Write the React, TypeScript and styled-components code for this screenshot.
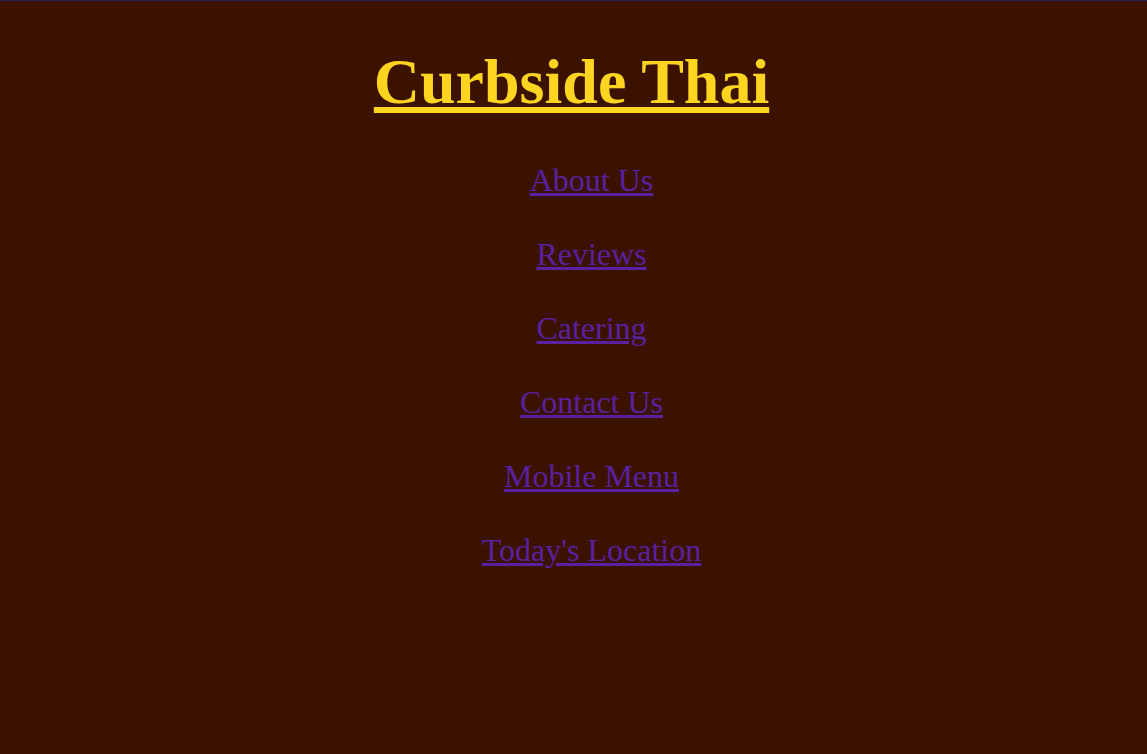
import React from "react";
import styled, { createGlobalStyle } from "styled-components";

const Global = createGlobalStyle`
  html {
    background: #3b1100;
    border-top: 1px solid #26204a;
  }
  body {
    margin: 8px 12px 8px 8px;
    background: #3b1100;
    font-family: "Liberation Serif", "Times New Roman", serif;
  }
`;

const Page = styled.main`
  display: block;
  text-align: center;
`;

const Title = styled.h1`
  margin: 36px 0 43px;
  font-size: 64px;
  font-weight: bold;
  line-height: normal;
  color: #fdd420;
  text-decoration: underline;
`;

const NavList = styled.ul`
  list-style: none;
  margin: 0;
  padding: 0 0 0 40px;
  display: flex;
  flex-direction: column;
  align-items: center;
  gap: 37px;
`;

const NavItem = styled.li`
  font-size: 32px;
  line-height: 37px;
`;

const NavLink = styled.a`
  color: #5b20a0;
  text-decoration: underline;
`;

const links = ["About Us", "Reviews", "Catering", "Contact Us", "Mobile Menu", "Today's Location"];

export default function App() {
  return (
    <>
      <Global />
      <Page>
        <Title>Curbside Thai</Title>
        <NavList>
          {links.map((l) => (
            <NavItem key={l}>
              <NavLink href="#">{l}</NavLink>
            </NavItem>
          ))}
        </NavList>
      </Page>
    </>
  );
}
